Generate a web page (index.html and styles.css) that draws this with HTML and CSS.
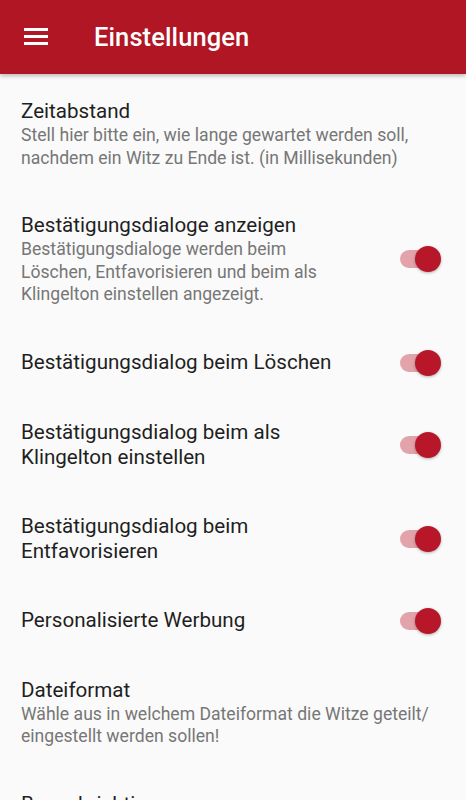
FILE: index.html
```html
<!DOCTYPE html>
<html lang="de">
<head>
<meta charset="utf-8">
<link rel="stylesheet" href="styles.css">
</head>
<body>
<header class="toolbar">
  <svg class="menu" width="24" height="24" viewBox="0 0 24 24"><rect x="0" y="2" width="24" height="3" fill="#fff"/><rect x="0" y="9" width="24" height="3" fill="#fff"/><rect x="0" y="16" width="24" height="3" fill="#fff"/></svg>
  <h1 class="title">Einstellungen</h1>
</header>
<main class="list">
  <div class="pref">
    <div class="text">
      <div class="ptitle">Zeitabstand</div>
      <div class="psum">Stell hier bitte ein, wie lange gewartet werden soll, nachdem ein Witz zu Ende ist. (in Millisekunden)</div>
    </div>
  </div>
  <div class="pref">
    <div class="text">
      <div class="ptitle">Bestätigungsdialoge anzeigen</div>
      <div class="psum narrow">Bestätigungsdialoge werden beim Löschen, Entfavorisieren und beim als Klingelton einstellen angezeigt.</div>
    </div>
    <div class="switch"><span class="track"></span><span class="thumb"></span></div>
  </div>
  <div class="pref">
    <div class="text"><div class="ptitle">Bestätigungsdialog beim Löschen</div></div>
    <div class="switch"><span class="track"></span><span class="thumb"></span></div>
  </div>
  <div class="pref">
    <div class="text"><div class="ptitle">Bestätigungsdialog beim als<br>Klingelton einstellen</div></div>
    <div class="switch"><span class="track"></span><span class="thumb"></span></div>
  </div>
  <div class="pref">
    <div class="text"><div class="ptitle">Bestätigungsdialog beim<br>Entfavorisieren</div></div>
    <div class="switch"><span class="track"></span><span class="thumb"></span></div>
  </div>
  <div class="pref">
    <div class="text"><div class="ptitle">Personalisierte Werbung</div></div>
    <div class="switch"><span class="track"></span><span class="thumb"></span></div>
  </div>
  <div class="pref">
    <div class="text">
      <div class="ptitle">Dateiformat</div>
      <div class="psum">Wähle aus in welchem Dateiformat die Witze geteilt/ eingestellt werden sollen!</div>
    </div>
  </div>
  <div class="pref">
    <div class="text"><div class="ptitle">Benachrichtigungen</div></div>
  </div>
</main>
</body>
</html>
```

FILE: styles.css
```css
html, body {
  margin: 0;
  padding: 0;
  background: #fafafa;
  font-family: Roboto, "Noto Sans", sans-serif;
  overflow: hidden;
}
.toolbar {
  height: 74px;
  background: #b01624;
  display: flex;
  align-items: center;
  padding-left: 24px;
  box-shadow: 0 2px 4px rgba(0,0,0,0.25);
  position: relative;
  z-index: 1;
}
.menu {
  display: block;
  margin-top: 2px;
}
.title {
  margin: 0 0 0 46px;
  color: #fff;
  font-size: 25.5px;
  font-weight: 500;
  letter-spacing: 0.1px;
}
.list {
  padding-top: 3px;
}
.pref {
  display: flex;
  align-items: center;
  padding: 22px 25px 22px 21px;
}
.text {
  flex: 1;
  min-width: 0;
}
.ptitle {
  font-size: 20.6px;
  line-height: 25px;
  color: #1f1f1f;
}
.psum {
  font-size: 17.6px;
  line-height: 22.5px;
  color: #767676;
}
.psum.narrow {
  max-width: 320px;
}
.switch {
  position: relative;
  width: 41px;
  height: 26px;
  flex: none;
  margin-left: 16px;
}
.track {
  position: absolute;
  left: 0;
  top: 4px;
  width: 37px;
  height: 18px;
  border-radius: 9px;
  background: #e3a3aa;
}
.thumb {
  position: absolute;
  right: 0;
  top: 0;
  width: 26px;
  height: 26px;
  border-radius: 50%;
  background: #b8172a;
  box-shadow: 0 1px 3px rgba(0,0,0,0.3);
}
```
